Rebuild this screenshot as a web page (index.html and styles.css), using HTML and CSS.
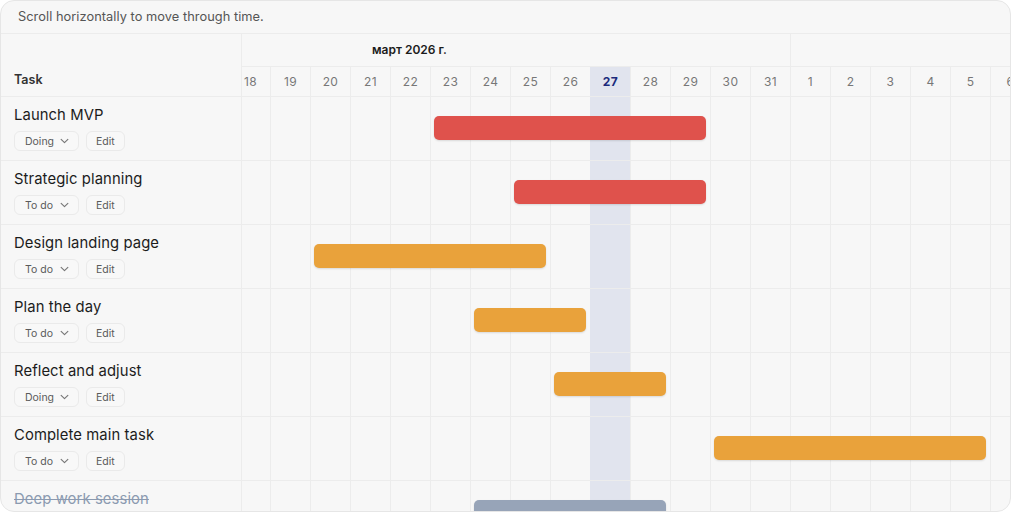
FILE: index.html
```html
<!DOCTYPE html>
<html lang="en">
<head>
<meta charset="utf-8">
<title>Gantt</title>
<link rel="stylesheet" href="styles.css">
</head>
<body>
<div class="card">
  <div class="hint">Scroll horizontally to move through time.</div>

  <div class="row head">
    <div class="task task-head">Task</div>
    <div class="tl">
      <div class="months">
        <div class="month m-mar">март 2026 г.</div>
        <div class="month m-apr"></div>
      </div>
      <div class="grid days">
        <div class="day">18</div><div class="day">19</div><div class="day">20</div><div class="day">21</div>
        <div class="day">22</div><div class="day">23</div><div class="day">24</div><div class="day">25</div>
        <div class="day">26</div><div class="day today-day">27</div><div class="day">28</div><div class="day">29</div>
        <div class="day">30</div><div class="day">31</div><div class="day">1</div><div class="day">2</div>
        <div class="day">3</div><div class="day">4</div><div class="day">5</div><div class="day">6</div>
      </div>
    </div>
  </div>

  <div class="row">
    <div class="task">
      <div class="title">Launch MVP</div>
      <div class="actions">
        <button class="btn sel">Doing <svg class="chev" viewBox="0 0 8 5"><polyline points="1,1 4,4 7,1"/></svg></button>
        <button class="btn">Edit</button>
      </div>
    </div>
    <div class="tl"><div class="grid body"><div class="today"></div><div class="bar red c6-13"></div></div></div>
  </div>

  <div class="row">
    <div class="task">
      <div class="title">Strategic planning</div>
      <div class="actions">
        <button class="btn sel">To do <svg class="chev" viewBox="0 0 8 5"><polyline points="1,1 4,4 7,1"/></svg></button>
        <button class="btn">Edit</button>
      </div>
    </div>
    <div class="tl"><div class="grid body"><div class="today"></div><div class="bar red c8-13"></div></div></div>
  </div>

  <div class="row">
    <div class="task">
      <div class="title">Design landing page</div>
      <div class="actions">
        <button class="btn sel">To do <svg class="chev" viewBox="0 0 8 5"><polyline points="1,1 4,4 7,1"/></svg></button>
        <button class="btn">Edit</button>
      </div>
    </div>
    <div class="tl"><div class="grid body"><div class="today"></div><div class="bar orange c3-9"></div></div></div>
  </div>

  <div class="row">
    <div class="task">
      <div class="title">Plan the day</div>
      <div class="actions">
        <button class="btn sel">To do <svg class="chev" viewBox="0 0 8 5"><polyline points="1,1 4,4 7,1"/></svg></button>
        <button class="btn">Edit</button>
      </div>
    </div>
    <div class="tl"><div class="grid body"><div class="today"></div><div class="bar orange c7-10"></div></div></div>
  </div>

  <div class="row">
    <div class="task">
      <div class="title">Reflect and adjust</div>
      <div class="actions">
        <button class="btn sel">Doing <svg class="chev" viewBox="0 0 8 5"><polyline points="1,1 4,4 7,1"/></svg></button>
        <button class="btn">Edit</button>
      </div>
    </div>
    <div class="tl"><div class="grid body"><div class="today"></div><div class="bar orange c9-12"></div></div></div>
  </div>

  <div class="row">
    <div class="task">
      <div class="title">Complete main task</div>
      <div class="actions">
        <button class="btn sel">To do <svg class="chev" viewBox="0 0 8 5"><polyline points="1,1 4,4 7,1"/></svg></button>
        <button class="btn">Edit</button>
      </div>
    </div>
    <div class="tl"><div class="grid body"><div class="today"></div><div class="bar orange c13-20"></div></div></div>
  </div>

  <div class="row">
    <div class="task">
      <div class="title done">Deep work session</div>
      <div class="actions">
        <button class="btn sel">Done <svg class="chev" viewBox="0 0 8 5"><polyline points="1,1 4,4 7,1"/></svg></button>
        <button class="btn">Edit</button>
      </div>
    </div>
    <div class="tl"><div class="grid body"><div class="today"></div><div class="bar gray c7-12"></div></div></div>
  </div>
</div>
</body>
</html>
```

FILE: styles.css
```css
* { box-sizing: border-box; }
html, body { margin: 0; padding: 0; background: #ffffff; }
body { font-family: "Inter", "Noto Sans", sans-serif; color: #222; }

.card {
  width: 1011px;
  height: 512px;
  border: 1px solid #e6e6e6;
  border-radius: 14px;
  background: #f7f7f7;
  overflow: hidden;
}

.hint {
  height: 33px;
  border-bottom: 1px solid #ececec;
  padding-left: 17px;
  font-size: 12.8px;
  line-height: 32px;
  color: #555;
  letter-spacing: 0.05px;
}

.row {
  display: flex;
  height: 64px;
  border-bottom: 1px solid #ececec;
}
.row.head { height: 63px; }

.task {
  width: 241px;
  flex: none;
  border-right: 1px solid #ececec;
  padding: 8px 13px 0;
}
.task-head {
  display: flex;
  align-items: flex-end;
  padding-bottom: 9px;
  font-size: 12.5px;
  font-weight: 600;
  color: #333;
}

.title {
  font-size: 14.8px;
  line-height: 20px;
  color: #1c1c1c;
  letter-spacing: 0.1px;
}
.title.done {
  color: #8b9ab0;
  text-decoration: line-through;
}

.actions {
  display: flex;
  gap: 7px;
  margin-top: 6px;
}
.btn {
  height: 20px;
  border: 1px solid #eaeaea;
  border-radius: 6px;
  background: #f8f8f8;
  font-family: inherit;
  font-size: 10.5px;
  color: #5a5a5a;
  padding: 0 9px;
  display: flex;
  align-items: center;
}
.btn.sel { width: 65px; padding-left: 10px; justify-content: space-between; }
.chev {
  width: 9px;
  height: 6px;
  fill: none;
  stroke: #777;
  stroke-width: 1;
  stroke-linecap: round;
  stroke-linejoin: round;
}

.tl {
  flex: 1;
  overflow: hidden;
  min-width: 0;
}

.grid {
  margin-left: -12px;
  display: grid;
  grid-template-columns: repeat(20, 40px);
  width: 800px;
}

.months {
  margin-left: -12px;
  display: flex;
  width: 800px;
  height: 33px;
  border-bottom: 1px solid #ececec;
}
.month {
  font-size: 12px;
  font-weight: 600;
  color: #1c1c1c;
  line-height: 32px;
}
.m-mar { width: 560px; padding-left: 142px; }
.m-apr { width: 240px; border-left: 1px solid #ececec; }

.days { height: 29px; }
.day {
  border-left: 1px solid #ececec;
  font-size: 12px;
  color: #777;
  text-align: center;
  line-height: 29px;
  letter-spacing: 0.4px;
}
.today-day {
  background: #e1e4ee;
  color: #1b2a7c;
  font-weight: 700;
  border-left-color: #e1e4ee;
}

.body {
  height: 63px;
  grid-template-rows: 63px;
  background-image: repeating-linear-gradient(to right, #ececec 0 1px, transparent 1px 40px);
}
.today {
  grid-column: 10;
  grid-row: 1;
  background: #e1e4ee;
}
.bar {
  grid-row: 1;
  align-self: start;
  height: 24px;
  margin: 19px 4px 0;
  border-radius: 5px;
  box-shadow: 0 1px 2px rgba(0, 0, 0, 0.12);
}
.red { background: #df524c; }
.orange { background: #e9a23b; }
.gray { background: #97a4b8; }

.c6-13 { grid-column: 6 / 13; }
.c8-13 { grid-column: 8 / 13; }
.c3-9 { grid-column: 3 / 9; }
.c7-10 { grid-column: 7 / 10; }
.c9-12 { grid-column: 9 / 12; }
.c13-20 { grid-column: 13 / 20; }
.c7-12 { grid-column: 7 / 12; }
```
